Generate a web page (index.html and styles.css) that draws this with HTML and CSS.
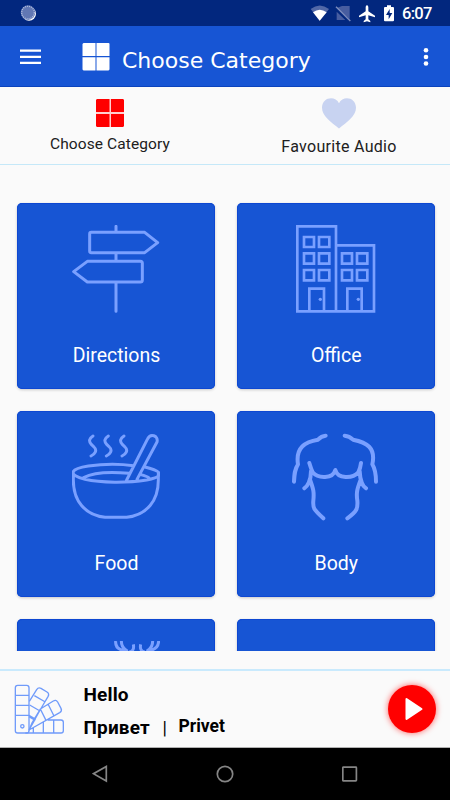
FILE: index.html
```html
<!DOCTYPE html>
<html lang="en">
<head>
<meta charset="utf-8">
<title>Choose Category</title>
<link rel="stylesheet" href="styles.css">
</head>
<body>
<div class="statusbar">
  <svg class="spinner" width="18" height="18" viewBox="0 0 18 18"><circle cx="9" cy="8.800" r="7" fill="#fff"/><circle cx="8" cy="7.600" r="7.300" fill="#6177b4"/><circle cx="8" cy="7.600" r="6.300" fill="none" stroke="#b5c0df" stroke-width="1.300" stroke-dasharray="1 1"/></svg>
  <svg class="status-icons" width="110" height="20" viewBox="0 0 330 60">
    <path d="M2 15Q29-6 57 15L29 50Z" fill="#5268a7"/><path d="M9 25Q29 10 50 25L29 50Z" fill="#fff"/>
    <path d="M86 10L96 6H119V45L80 13ZM80 23V48H106Z" fill="#475da0"/><path d="M78 8L121 51" stroke="#7d8dbd" stroke-width="4"/>
    <path d="M171 4q4 0 4 6v12l20 13v5l-20-6v12l6 5v4l-10-3-10 3v-4l6-5V34l-20 6v-5l20-13V10q0-6 4-6z" fill="#fff"/>
    <path d="M231 4h12v5h6q3 0 3 3v37q0 3-3 3h-24q-3 0-3-3V12q0-3 3-3h6z" fill="#fff"/><path d="M239 15L228 33h8v13l11-19h-8z" fill="#02277e"/>
  </svg>
  <span class="clock">6:07</span>
</div>
<header class="appbar">
  <svg class="menu" width="22" height="16" viewBox="0 0 22 16"><path d="M0 1.700h21M0 7.900h21M0 13.900h21" stroke="#fff" stroke-width="2.300"/></svg>
  <svg class="grid-icon" width="28" height="28" viewBox="0 0 28 28"><path d="M1.500 0H13.500V13H.5V1zM14.500 0H26.500Q27.500 0 27.500 1V13H14.500zM.5 14.200H13.500V27.600H1.500L.5 26.600zM14.500 14.200H27.500V26.600L26.500 27.600H14.500z" fill="#fff"/></svg>
  <h1>Choose Category</h1>
  <svg class="more" width="6" height="20" viewBox="0 0 6 20"><g fill="#fff"><circle cx="3" cy="3.300" r="2.300"/><circle cx="3" cy="10" r="2.300"/><circle cx="3" cy="16.500" r="2.300"/></g></svg>
</header>
<nav class="tabs">
  <div class="tab choose">
    <svg width="28" height="28" viewBox="0 0 28 28"><rect width="28" height="28" rx="1" fill="#ffd0d0"/><path d="M1 0H13.500V13H0V1zM15 0H27L28 1V13H15zM0 15H13.500V28H1L0 27zM15 15H28V27L27 28H15z" fill="red"/></svg>
    <span>Choose Category</span>
  </div>
  <div class="tab favourite">
    <svg width="34" height="31" viewBox="291 40 102 92"><path d="M342 131C318 112 291 94 291 69C291 36 331 31 342 55C353 31 393 36 393 69C393 94 366 112 342 131Z" fill="#c8d3f1"/></svg>
    <span>Favourite Audio</span>
  </div>
</nav>
<main class="categories">
  <article class="card">
    <svg viewBox="186 90 264 264"><path d="M318 94V111M318 174V198M318 262V349M244 112H404L443 143L404 173H244Q239 173 239 168V117Q239 112 244 112ZM232 199H391Q397 199 397 205V255Q397 261 391 261H232L191 230Z"/></svg>
    <h2>Directions</h2>
  </article>
  <article class="card">
    <svg viewBox="186 90 264 264"><g class="square"><path d="M202 349V94H318V349M318 151H432V349H202M238 349V281H282V349M352 349V281H395V349"/><path d="M222 126h30v30h-30zM267 126h31v30h-31zM222 175h30v31h-30zM267 175h31v31h-31zM222 225h30v31h-30zM267 225h31v31h-31zM336 175h30v31h-30zM381 175h31v31h-31zM336 225h30v31h-30zM381 225h31v31h-31z"/></g><circle class="dot" cx="271" cy="313" r="5"/><circle class="dot" cx="385" cy="313" r="5"/></svg>
    <h2>Office</h2>
  </article>
  <article class="card">
    <svg viewBox="186 99 264 264"><path d="M402 200C465 215 461 230 410 240C354 249 272 249 225 238C173 225 178 207 235 198C275 192 329 191 371 197M190 219V240C190 302 224 345 285 352H350C411 345 445 302 445 240V219M221 233C258 213 315 216 357 220M392 224Q411 229 416 233M350 240L412 118C421 98 446 107 441 126L381 238M249 108C238 115 235 124 244 133L252 141C263 151 254 163 243 168M295 108C284 115 281 124 290 133L298 141C309 151 300 163 289 168M342 108C331 115 328 124 337 133L345 141C356 151 347 163 336 168"/></svg>
    <h2>Food</h2>
  </article>
  <article class="card">
    <svg viewBox="186 99 264 264"><g class="bold"><path d="M287 107Q274 108 264 119C226 125 196 143 204 193C194 208 193 222 192 245M344 107Q358 108 369 119C410 127 438 143 427 193C436 208 438 224 438 245M238 189C241 199 244 208 248 217C264 236 309 237 316 210C323 237 368 236 385 217Q391 205 393 189M243 213C243 241 232 260 223 265M240 239C249 265 253 273 250 302C248 325 251 328 280 355M389 213C390 242 399 260 408 265M392 239C382 266 378 277 382 302C384 325 381 334 352 355"/></g></svg>
    <h2>Body</h2>
  </article>
  <article class="card">
    <svg viewBox="216 123 264 264"><path class="antlers" d="M347 123Q345 146 369 151Q382 156 389 163M364 123Q364 143 383 154M400 133Q404 153 388 156M422 133Q418 153 434 156M458 123Q458 143 440 154M476 123Q475 146 452 151Q441 156 433 163"/></svg>
  </article>
  <article class="card"></article>
</main>
<section class="player">
  <svg class="swatches" width="51" height="51" viewBox="0 0 153 153"><g fill="none" stroke="#709bfa" stroke-width="4" stroke-linejoin="round"><rect x="4" y="4" width="41" height="143" rx="7"/><path d="M4 34H45M4 64H45M4 94H45M46 52L68 17Q73 9 81 13L99 24Q107 29 102 38L80 75L45 138M61 35L94 54M47 63L78 81M45 94L64 105L45 138L55 115L79 75L118 51Q126 46 131 54L141 73Q145 81 137 86L45 138M102 60L120 96M79 75L96 109M45 98L64 109M101 108H141Q148 108 148 115V140Q148 147 141 147H34M119 108V147M88 115V147M58 130V147"/><circle cx="25" cy="127" r="5"/></g></svg>
  <div class="phrase">
    <strong class="source">Hello</strong>
    <div class="translation"><strong class="cyrillic">Привет</strong><span class="bar">|</span><strong class="latin">Privet</strong></div>
  </div>
  <button class="play" aria-label="Play"><svg width="18" height="24" viewBox="0 0 18 24"><path d="M1.500 2L16.500 12L1.500 22Z" fill="#fff" stroke="#fff" stroke-width="2" stroke-linejoin="round"/></svg></button>
</section>
<footer class="navbar">
  <svg width="16" height="18" viewBox="0 0 16 18"><path d="M14.300 1.500V16L1.500 8.700Z"/></svg>
  <svg width="18" height="18" viewBox="0 0 18 18"><circle cx="9" cy="9" r="7.700"/></svg>
  <svg width="16" height="16" viewBox="0 0 16 16"><rect x=".8" y="1.200" width="13.600" height="13.600" rx=".6"/></svg>
</footer>
</body>
</html>
```
FILE: styles.css
```css
* { box-sizing: border-box; }
body { margin: 0; width: 450px; height: 800px; overflow: hidden; display: flex; flex-direction: column; background: #fafafa; font-family: Roboto, sans-serif; }
svg { display: block; flex: none; }
.statusbar { height: 26px; flex: none; display: flex; align-items: flex-start; background: #02277e; color: #fff; }
.spinner { margin: 5px 0 0 20px; }
.status-icons { margin: 4px 0 0 272px; }
.clock { margin-left: -18px; font-size: 16.500px; font-weight: 500; line-height: 28px; letter-spacing: -.7px; white-space: nowrap; }
.appbar { height: 61px; flex: none; display: flex; align-items: flex-start; background: #1755d4; color: #fff; border-bottom: 1px solid #0b43bd; }
.menu { margin: 23px 0 0 20px; }
.grid-icon { margin: 17px 0 0 40px; }
h1 { margin: 21px 0 0 12px; width: 289px; font: 400 22px/28px "DejaVu Sans", sans-serif; white-space: nowrap; }
.more { margin: 21px 0 0 12px; }
.tabs { height: 78px; flex: none; display: flex; border-bottom: 1px solid #c5e8f8; }
.tab { flex: none; display: flex; flex-direction: column; align-items: center; padding-top: 12px; color: #202020; line-height: 20px; }
.tab span { margin-top: 7px; }
.choose { width: 220px; font-size: 15.500px; letter-spacing: .1px; }
.favourite { width: 238px; padding-top: 11px; font-size: 16px; letter-spacing: .3px; }
.favourite span { margin-top: 8px; }
.categories { height: 486px; flex: none; overflow: hidden; display: grid; grid-template-columns: 198px 197.500px; grid-auto-rows: 186px; gap: 22px; padding: 38px 15px 0 17px; }
.card { display: flex; flex-direction: column; align-items: center; padding-top: 22px; border-radius: 5px; background: #1755d4; box-shadow: inset 0 0 0 1px #0d47d2, 0 1px 3px #0003; }
.card svg { width: 88px; height: 88px; fill: none; stroke: #7aa0ff; stroke-width: 9; stroke-linecap: round; stroke-linejoin: round; overflow: hidden; }
.card .square { stroke-width: 8; stroke-linecap: square; stroke-linejoin: miter; }
.card .bold { stroke-width: 12; }
.card .antlers { stroke-width: 9; stroke-linecap: butt; }
.card .dot { fill: #7aa0ff; stroke: none; }
h2 { margin: 30px 0 0 1px; font-size: 19.500px; line-height: 25px; font-weight: 400; letter-spacing: 0; color: #fff; }
.player { height: 79px; flex: none; margin-top: 18px; display: flex; border-top: 2px solid #c9eafd; border-bottom: 1px solid #b0b0b0; }
.swatches { margin: 13px 0 0 13.500px; }
.phrase { margin-left: 19px; width: 304.500px; padding-top: 10.500px; color: #000; }
.phrase strong { font-weight: 700; font-size: 19px; line-height: 26px; display: block; letter-spacing: .15px; }
.translation { display: flex; margin-top: 7px; }
.phrase .cyrillic { width: 67px; }
.bar { margin-left: 12px; width: 5px; font-size: 18px; line-height: 26px; }
.phrase .latin { margin-left: 11px; font-size: 17.500px; line-height: 23px; letter-spacing: 0; }
.play { width: 48px; height: 48px; margin-top: 14px; padding: 0 0 0 3px; border: 0; border-radius: 50%; background: red; box-shadow: 0 0 6px #ff0000a0; display: flex; align-items: center; justify-content: center; }
.navbar { flex: 1; display: flex; align-items: center; justify-content: center; background: #000; gap: 108px; }
.navbar svg { fill: none; stroke: #858585; stroke-width: 1.7; }
```
